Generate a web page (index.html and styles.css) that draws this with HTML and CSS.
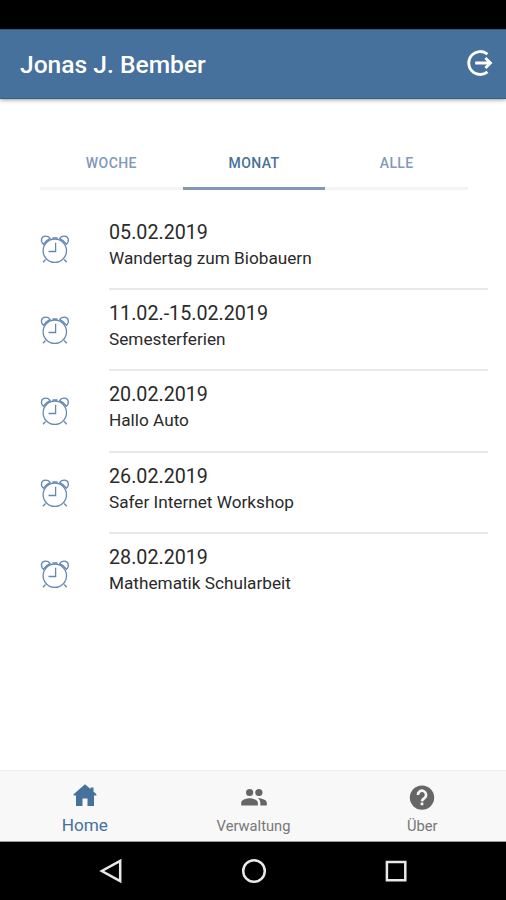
FILE: index.html
```html
<!DOCTYPE html>
<html lang="de">
<head>
  <meta charset="utf-8">
  <title>Termine</title>
  <link rel="stylesheet" href="styles.css">
</head>
<body>
  <svg class="symbols">
    <symbol id="clock" viewBox="0 0 30 30">
      <circle cx="14.8" cy="16.7" r="11.7"/>
      <path d="M15.600 8.700v8.800H8.500"/>
      <path d="M3.400 10.200C.2 7.600 1 2.200 5.400 2.200c2.400 0 4 .9 4.700 2.500C7.200 5.900 5 7.600 3.400 10.200z"/>
      <path d="M26.400 10.200C29.600 7.600 28.800 2.200 24.400 2.200c-2.400 0-4 .9-4.700 2.500 2.900 1.200 5.100 2.900 6.700 5.500z"/>
      <path d="M12.500 4h5M5.500 25.500 3 28.300M24.200 25.500l2.500 2.800"/>
    </symbol>
  </svg>

  <div class="statusbar"></div>

  <header class="header">
    <h1>Jonas J. Bember</h1>
    <svg class="logout" viewBox="0 0 28 28">
      <path d="M21.500 5.100A11.500 11.500 0 1 0 21.500 22.900"/>
      <path d="M9.200 14h15M19.400 8.900l5.100 5.100-5.100 5.100"/>
    </svg>
  </header>

  <main class="content">
    <nav class="tabs">
      <a class="tab">WOCHE</a>
      <a class="tab active">MONAT</a>
      <a class="tab">ALLE</a>
    </nav>

    <ul class="list">
      <li class="item">
        <svg class="clock"><use href="#clock"/></svg>
        <div class="text">
          <h2>05.02.2019</h2>
          <p>Wandertag zum Biobauern</p>
        </div>
      </li>
      <li class="item">
        <svg class="clock"><use href="#clock"/></svg>
        <div class="text">
          <h2>11.02.-15.02.2019</h2>
          <p>Semesterferien</p>
        </div>
      </li>
      <li class="item">
        <svg class="clock"><use href="#clock"/></svg>
        <div class="text">
          <h2>20.02.2019</h2>
          <p>Hallo Auto</p>
        </div>
      </li>
      <li class="item">
        <svg class="clock"><use href="#clock"/></svg>
        <div class="text">
          <h2>26.02.2019</h2>
          <p>Safer Internet Workshop</p>
        </div>
      </li>
      <li class="item">
        <svg class="clock"><use href="#clock"/></svg>
        <div class="text">
          <h2>28.02.2019</h2>
          <p>Mathematik Schularbeit</p>
        </div>
      </li>
    </ul>
  </main>

  <footer class="tabbar">
    <a class="tabbar-item active">
      <svg viewBox="0 0 28 28"><path d="M14 2.200 19.500 7V5.500h3v4.100l2.900 2.600v1.300H23V24h-6.500v-7.500h-5V24H5V13.500H2.600v-1.300z"/></svg>
      <span>Home</span>
    </a>
    <a class="tabbar-item">
      <svg viewBox="0 0 28 28"><circle cx="9.600" cy="10.500" r="3.600"/><circle cx="18.900" cy="10.500" r="3.600"/><path d="M1.200 23.500v-2.800c0-2.900 5.600-4.400 8.400-4.400s8.300 1.500 8.300 4.400v2.800zM18.700 16.300c2.900.1 8.100 1.600 8.100 4.400v2.800h-6.500v-2.800c0-1.900-.8-3.300-2.300-4.400z"/></svg>
      <span>Verwaltung</span>
    </a>
    <a class="tabbar-item">
      <svg viewBox="0 0 28 28"><circle cx="14" cy="15.600" r="12.200"/><path class="mark" d="M9.900 12.900a4.100 4.100 0 1 1 6.700 3.100c-1.600 1.200-2.600 1.700-2.600 3.300M14 20.600v2.700"/></svg>
      <span>Über</span>
    </a>
  </footer>

  <div class="navbar">
    <svg viewBox="0 0 26 26"><path d="M21.200 2.800v20.400L2.800 13z"/></svg>
    <svg viewBox="0 0 26 26"><circle cx="13" cy="13" r="10.800"/></svg>
    <svg viewBox="0 0 26 26"><path d="M3.900 3.900h18.400v18.400H3.900z"/></svg>
  </div>
</body>
</html>
```

FILE: styles.css
```css
* {
  box-sizing: border-box;
}

body {
  margin: 0;
  height: 100vh;
  display: flex;
  flex-direction: column;
  overflow: hidden;
  background-color: #fff;
  color: #2a2a2a;
  font-family: Roboto, sans-serif;
}

h1,
h2,
p,
ul {
  margin: 0;
  padding: 0;
}

.symbols {
  display: none;
}

.statusbar {
  height: 29px;
  background-color: #000;
}

.header {
  height: 70px;
  padding: 0 12px 0 20px;
  display: flex;
  align-items: center;
  justify-content: space-between;
  background-color: #46719c;
  border-top: 1px solid #2c5a87;
  border-bottom: 1px solid #2f608f;
  box-shadow: 0 1px 4px rgba(0, 0, 0, 0.4);
  color: #fff;
}

.header h1 {
  padding-top: 2px;
  font-size: 24.600px;
  font-weight: 500;
  line-height: 30px;
}

.logout {
  width: 28px;
  height: 28px;
  margin-bottom: 3px;
  fill: none;
  stroke: #fff;
  stroke-width: 2.800;
}

.content {
  flex: 1;
  padding: 38px 18px 0 40px;
}

.tabs {
  display: flex;
  margin-right: 20px;
}

.tab {
  flex: 1;
  height: 53px;
  padding-top: 16px;
  border-bottom: 3px solid #f4f4f4;
  color: #7f9aba;
  font-size: 14px;
  font-weight: 500;
  letter-spacing: 0.400px;
  line-height: 20px;
  text-align: center;
}

.tab.active {
  border-color: #8298b5;
  color: #46719c;
}

.list {
  margin-top: 19px;
  list-style: none;
}

.item {
  display: flex;
  height: 81.200px;
}

.clock {
  width: 30px;
  height: 30px;
  margin: 25px 39px 0 0;
  fill: none;
  stroke: #6488b4;
  stroke-width: 1.300;
}

.text {
  flex: 1;
  padding-top: 11px;
  border-bottom: 2px solid #e8e8e8;
}

.item:last-child .text {
  border-bottom: none;
}

.text h2 {
  font-size: 19.700px;
  font-weight: 400;
  line-height: 26px;
}

.text p {
  font-size: 17.200px;
  line-height: 24px;
}

.tabbar {
  height: 72px;
  display: flex;
  background-color: #f8f8f8;
  border-top: 1px solid #eee;
  border-bottom: 1px solid #999;
}

.tabbar-item {
  flex: 1;
  display: flex;
  flex-direction: column;
  align-items: center;
  padding: 11px 0 0 1px;
  color: #777;
  font-size: 14.700px;
}

.tabbar-item svg {
  width: 28px;
  height: 28px;
  fill: #666;
}

.tabbar-item .mark {
  fill: none;
  stroke: #f8f8f8;
  stroke-width: 2.700;
}

.tabbar-item span {
  margin-top: 5px;
  line-height: 22px;
}

.tabbar-item.active {
  color: #46719c;
  font-size: 17.200px;
}

.tabbar-item.active span {
  margin-top: 4px;
}

.tabbar-item.active svg {
  fill: #46719c;
}

.navbar {
  height: 58px;
  display: flex;
  justify-content: space-between;
  padding: 16px 97px 0 99px;
  background-color: #000;
}

.navbar svg {
  width: 26px;
  height: 26px;
  fill: none;
  stroke: #e8e8e8;
  stroke-width: 2.500;
}
```
